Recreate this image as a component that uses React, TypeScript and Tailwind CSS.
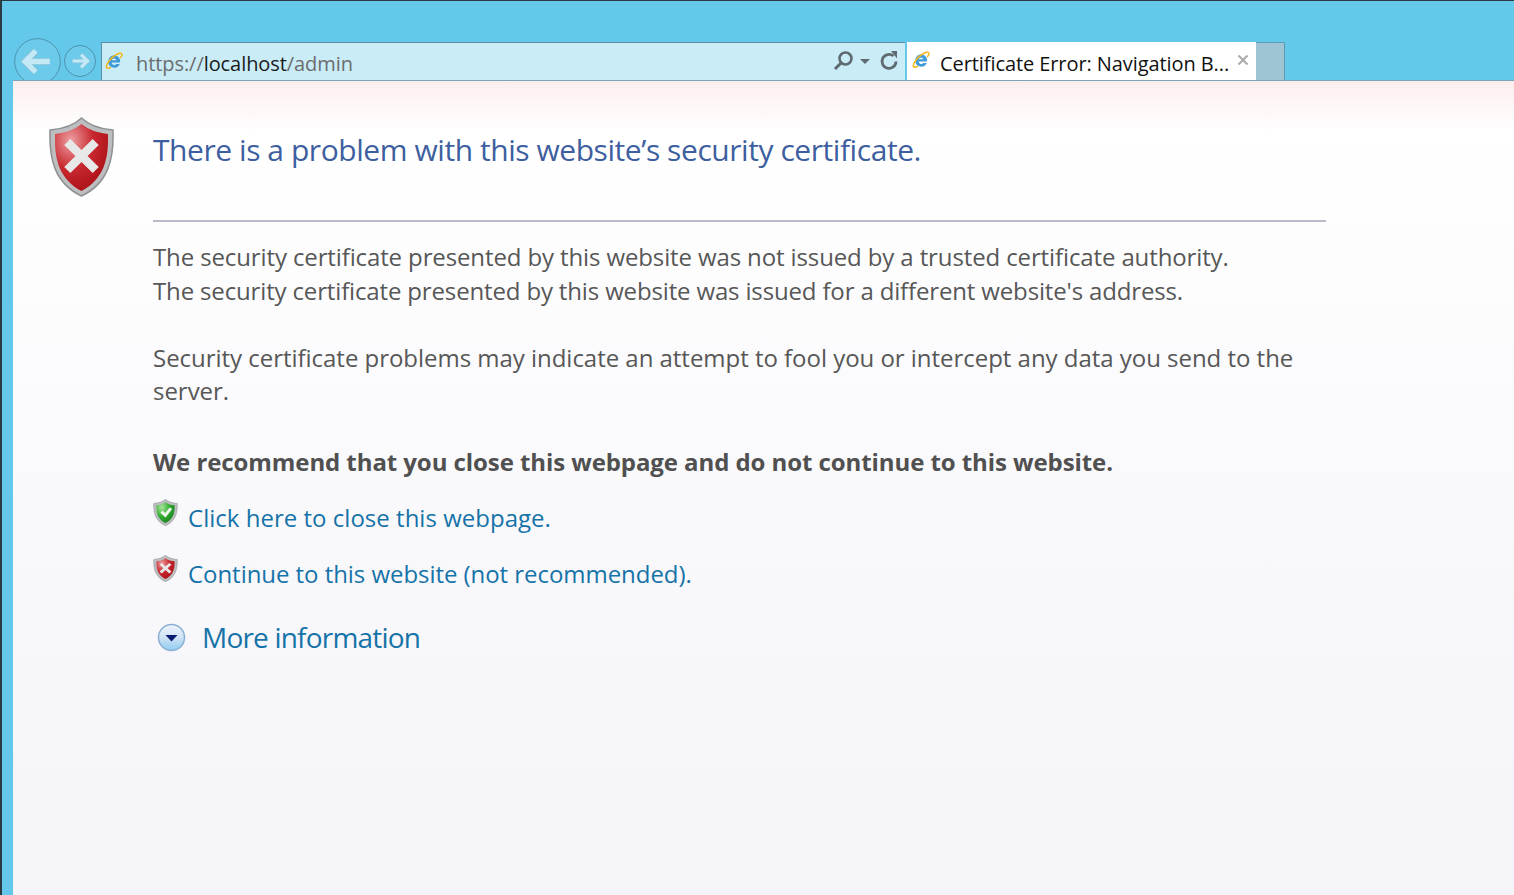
import { useId } from "react";

function IeLogo() {
  return (
    <svg width="18" height="18" viewBox="0 0 18 18" fill="none" className="shrink-0">
      <path d="M9.500 3.200a6 6 0 0 0-6.200 6.300 6 6 0 0 0 11.500 2.500h-3.400a2.700 2.700 0 0 1-4.800-1.400h8.500a6.200 6.200 0 0 0-5.600-7.400Z" fill="#3f9bd9" />
      <path d="M6.700 8.300a2.400 2.400 0 0 1 4.700 0Z" fill="#dff1fb" />
      <path d="M1.500 15.600C.2 13.400 6 5.200 11.500 2.500c3-1.500 5.200-1.500 5.500-.2.200.9-.6 2.300-1.500 3.300" stroke="#f2b71c" strokeWidth="1.500" strokeLinecap="round" />
      <path d="M1.500 15.600c.8 1 2.700.6 4.200-.2" stroke="#f2b71c" strokeWidth="1.300" strokeLinecap="round" />
    </svg>
  );
}

function ArrowButton({ size, dir }: { size: number; dir: "back" | "forward" }) {
  const arrow = "M10 24h28M22 12 10 24l12 12";
  return (
    <svg width={size} height={size} viewBox="0 0 48 48" fill="none" className="shrink-0">
      <circle cx="24" cy="24" r="23.300" fill="#6ccbea" stroke="#4f93ad" strokeWidth={48 / size} />
      <g transform={dir === "back" ? "translate(24 24) scale(0.9) translate(-24 -24)" : "translate(24 24) scale(-0.8 0.8) translate(-24 -24)"}>
        <path d={arrow} stroke="#86bfd4" strokeWidth="8" />
        <path d={arrow} stroke="#c4e9f6" strokeWidth="6" />
      </g>
    </svg>
  );
}

function Shield({ width, height, tone }: { width: number; height: number; tone: "red" | "green" }) {
  const id = useId();
  const small = width < 40;
  const stops = tone === "red" ? ["#eda0a2", "#c8272e", "#a80f16"] : ["#a8e69c", "#35ad33", "#157c1c"];
  return (
    <svg width={width} height={height} viewBox="0 0 66 80" preserveAspectRatio="none" className="shrink-0">
      <defs>
        <radialGradient id={id} cx="0.3" cy="0.25" r="0.85">
          <stop offset="0" stopColor={stops[0]} />
          <stop offset="0.5" stopColor={stops[1]} />
          <stop offset="1" stopColor={stops[2]} />
        </radialGradient>
      </defs>
      <path d="M33 1C25 9 14 12 2 13c-1 28 4 53 31 66 27-13 32-38 31-66C52 12 41 9 33 1Z" fill="#bcbec0" stroke="#8e9194" strokeWidth="1.500" />
      <g transform={small ? "translate(33 40) scale(0.92) translate(-33 -40)" : undefined}>
        <path d="M33 7C26 13 16 16 7 17c-1 25 4 45 26 57 22-12 27-32 26-57-9-1-19-4-26-10Z" fill={`url(#${id})`} />
        {tone === "red" ? (
          <path d="M22 22 33 33l11-11 6 6-11 11 11 11-6 6-11-11-11 11-6-6 11-11-11-11Z" fill="#e8e8e8" />
        ) : (
          <path d="M18 40l7-6 7 8 13-18 7 5-19 27Z" fill="#f2f7f0" />
        )}
      </g>
    </svg>
  );
}

function MoreIcon() {
  return (
    <svg width="29" height="29" viewBox="0 0 29 29" className="shrink-0">
      <defs>
        <linearGradient id="moreFill" x1="0" y1="0" x2="0" y2="1">
          <stop offset="0" stopColor="#eef4fb" />
          <stop offset="0.5" stopColor="#cfe2f5" />
          <stop offset="1" stopColor="#8fcbf0" />
        </linearGradient>
      </defs>
      <circle cx="14.500" cy="14.500" r="13" fill="url(#moreFill)" stroke="#8bb0d3" strokeWidth="1.500" />
      <path d="M8.500 12h12l-6 6.500Z" fill="#0a1a70" />
    </svg>
  );
}

export default function App() {
  return (
    <div className="flex h-[895px] w-[1514px] flex-col overflow-hidden border-t border-l-2 border-t-[#2b3a42] border-l-[#2b3a42] bg-[#63c8ea] font-['Open_Sans','Noto_Sans',sans-serif]">
      {/* Browser chrome */}
      <div className="relative flex h-[79px] shrink-0 items-end pl-[12px]">
        <div className="absolute left-[12px] top-[37px] flex items-start">
          <ArrowButton size={47} dir="back" />
          <div className="mt-[7px] ml-[3px]">
            <ArrowButton size={32} dir="forward" />
          </div>
        </div>
        <div className="relative ml-[87px] flex h-[38px] w-[804px] items-center border-t border-l border-[#5e8ba3] bg-[#c9ecf7] pl-[3px] pr-[5px]">
          <div className="-mt-[2px]">
            <IeLogo />
          </div>
          <div className="mt-[5px] ml-[13px] flex-1 text-[20px] tracking-[-0.07px] text-[#6d6d6d]">
            https://<span className="text-[#1b1b1b]">localhost</span>/admin
          </div>
          <svg width="24" height="24" viewBox="0 0 24 24" fill="none" className="-mt-[1px] -ml-[2px]">
            <circle cx="13.500" cy="9.500" r="6" stroke="#5f6a70" strokeWidth="2.600" />
            <path d="M9 14l-6 6" stroke="#5f6a70" strokeWidth="3" />
          </svg>
          <svg width="10" height="6" viewBox="0 0 10 6" className="ml-[4px] mt-[1px]">
            <path d="M0 0h10L5 5Z" fill="#5f6a70" />
          </svg>
          <svg width="22" height="22" viewBox="0 0 22 22" fill="none" className="-mt-[1px] ml-[8px]">
            <path d="M15.500 6A7 7 0 1 0 18 11.500" stroke="#5f6a70" strokeWidth="2.800" />
            <path d="M13 1h6v7.500Z" fill="#5f6a70" />
          </svg>
        </div>
        <div className="relative flex h-[38px] w-[351px] items-center border-l-2 border-l-[#63c8ea] bg-white pl-[5px] pr-[5px]">
          <div className="-mt-[2px]">
            <IeLogo />
          </div>
          <div className="mt-[5px] ml-[10px] flex-1 whitespace-nowrap text-[20px] tracking-[-0.08px] text-[#111111]">
            Certificate Error: Navigation B...
          </div>
          <svg width="12" height="12" viewBox="0 0 12 12" fill="none" className="-mt-[3px] -ml-[2px] mr-[2px]">
            <path d="M1.500 1.500l9 9M10.500 1.500l-9 9" stroke="#a9a9a9" strokeWidth="2" />
          </svg>
        </div>
        <div className="h-[38px] w-[29px] border-t border-r border-[#5e9ab3] bg-[#9fc4d3]" />
      </div>

      {/* Page */}
      <main className="relative ml-[11px] flex flex-1 border-t border-[#7ea6ba] bg-[linear-gradient(180deg,#fdeeee_0px,#ffffff_50px,#fbfbfd_300px,#f4f4f9_814px)]">
        <div className="flex w-[140px] shrink-0 justify-center pt-[36px] pr-[4px]">
          <Shield width={67} height={80} tone="red" />
        </div>
        <div className="w-[1173px]">
          <h1 className="mt-[49px] h-[90px] text-[30px] leading-[40px] tracking-[-0.44px] text-[#3e5f9f]">
            There is a problem with this website’s security certificate.
          </h1>
          <div className="h-[2px] bg-[#b9bcc8]" />
          <div className="mt-[18px] text-[24px] leading-[34px] text-[#575757]">
            <p className="tracking-[-0.12px]">The security certificate presented by this website was not issued by a trusted certificate authority.</p>
            <p className="tracking-[-0.15px]">The security certificate presented by this website was issued for a different website's address.</p>
          </div>
          <p className="mt-[33px] text-[24px] leading-[33px] tracking-[-0.03px] text-[#575757]">
            Security certificate problems may indicate an attempt to fool you or intercept any data you send to the server.
          </p>
          <p className="mt-[38px] text-[24px] leading-[34px] font-bold tracking-[-0.08px] text-[#505050]">
            We recommend that you close this webpage and do not continue to this website.
          </p>
          <a className="mt-[21px] flex items-start gap-[10px] text-[24px] leading-[34px] tracking-[0.02px] text-[#1673a8]">
            <div className="-mt-[1px]">
              <Shield width={25} height={27} tone="green" />
            </div>
            <span className="mt-[1px]">Click here to close this webpage.</span>
          </a>
          <a className="mt-[21px] flex items-start gap-[10px] text-[24px] leading-[34px] tracking-[-0.05px] text-[#1673a8]">
            <div className="-mt-[1px]">
              <Shield width={25} height={27} tone="red" />
            </div>
            <span className="mt-[1px]">Continue to this website (not recommended).</span>
          </a>
          <a className="mt-[26px] ml-[4px] flex items-center gap-[16px] text-[28px] leading-[40px] tracking-[-0.8px] text-[#1673a8]">
            <MoreIcon />
            <span>More information</span>
          </a>
        </div>
      </main>
    </div>
  );
}
